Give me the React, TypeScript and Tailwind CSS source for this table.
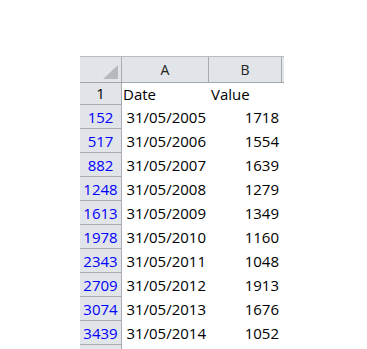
import React from "react";

const rows: [string, string, string][] = [
  ["152", "31/05/2005", "1718"],
  ["517", "31/05/2006", "1554"],
  ["882", "31/05/2007", "1639"],
  ["1248", "31/05/2008", "1279"],
  ["1613", "31/05/2009", "1349"],
  ["1978", "31/05/2010", "1160"],
  ["2343", "31/05/2011", "1048"],
  ["2709", "31/05/2012", "1913"],
  ["3074", "31/05/2013", "1676"],
  ["3439", "31/05/2014", "1052"],
];

export default function App() {
  return (
    <div
      className="w-[367px] h-[349px] overflow-hidden bg-white pt-[56px] pl-[80px] text-black"
      style={{ fontFamily: '"Open Sans", "Liberation Sans", sans-serif' }}
    >
      <div className="w-[204px] flex flex-col">
        {/* column header row */}
        <div className="flex h-[27px] bg-[#e1e4e8] border-t border-b border-t-[#b9bdc2] border-b-[#a3a7ac]">
          <div className="w-[42px] h-full border-r border-[#a8acb1] relative">
            <svg className="absolute left-0 top-0" width="41" height="25" viewBox="0 0 41 25">
              <polygon points="38,8 38,22 23,22" fill="#b6babf" />
            </svg>
          </div>
          <div className="w-[87px] h-full border-r border-[#a8acb1] flex items-center justify-center text-[14px] text-[#222] leading-none pt-[1px]">
            A
          </div>
          <div className="w-[73px] h-full border-r border-[#a8acb1] flex items-center justify-center text-[14px] text-[#222] leading-none pt-[1px]">
            B
          </div>
          <div className="w-[2px] h-full" />
        </div>
        {/* row 1 */}
        <div className="flex h-[22px] text-[15px]">
          <div className="w-[42px] h-full bg-[#e1e4e8] border-r border-b border-[#a8acb1] text-center leading-[21px]">
            1
          </div>
          <div className="w-[87px] h-full pl-[1px] leading-[22px]">Date</div>
          <div className="w-[73px] h-full pl-[2px] leading-[22px]">Value</div>
        </div>
        {rows.map(([n, d, v]) => (
          <div key={n} className="flex h-[24px] text-[15px]">
            <div className="w-[42px] h-full bg-[#e1e4e8] border-r border-b border-[#a8acb1] text-center text-[#0000ff] leading-[22px] pt-[1px]">
              {n}
            </div>
            <div className="w-[87px] h-full text-right pr-[3px] leading-[22px] pt-[1px]">{d}</div>
            <div className="w-[73px] h-full text-right pr-[3px] leading-[22px] pt-[1px]">{v}</div>
          </div>
        ))}
        <div className="flex h-[24px]">
          <div className="w-[42px] h-full bg-[#e1e4e8] border-r border-[#a8acb1]" />
        </div>
      </div>
    </div>
  );
}
